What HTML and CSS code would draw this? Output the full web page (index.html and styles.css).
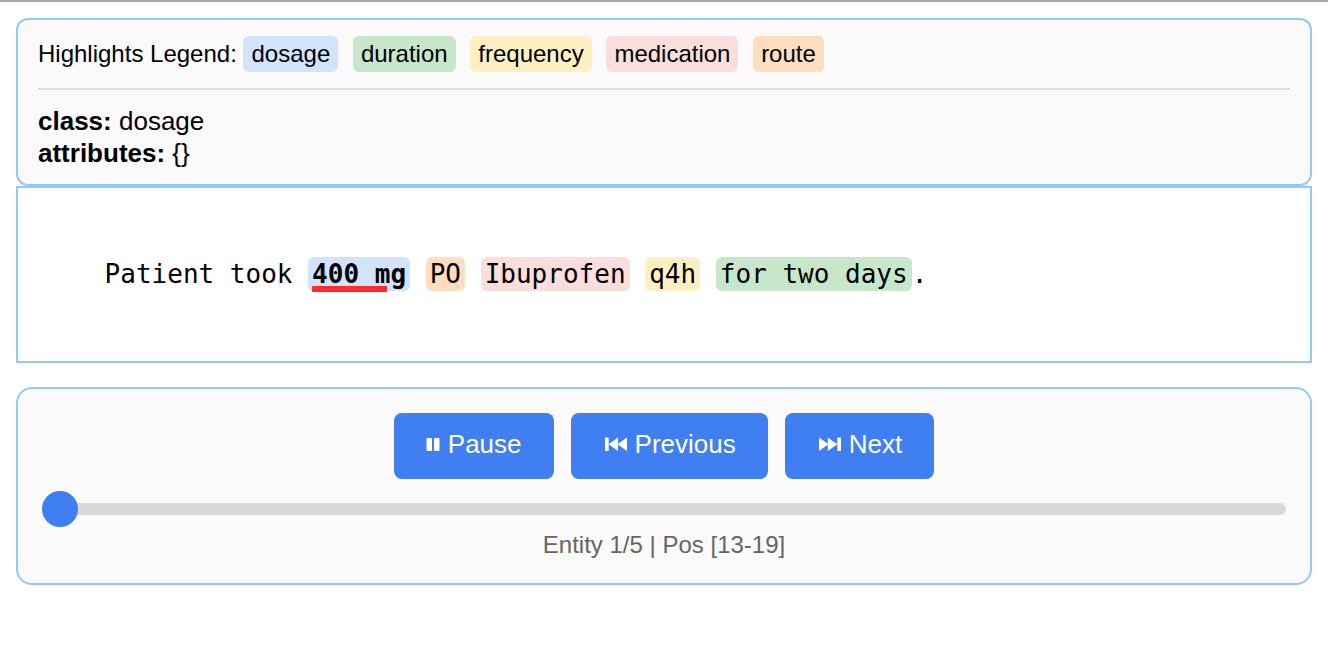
FILE: index.html
```html
<!DOCTYPE html>
<html lang="en">
<head>
<meta charset="utf-8">
<title>Extraction Viewer</title>
<link rel="stylesheet" href="styles.css">
</head>
<body>
<div class="wrapper">
  <div class="attributes-panel">
    <div class="legend">Highlights Legend: <span class="label c-dosage">dosage</span> <span class="label c-duration">duration</span> <span class="label c-frequency">frequency</span> <span class="label c-medication">medication</span> <span class="label c-route">route</span></div>
    <div class="attrs">
      <div><strong>class:</strong> dosage</div>
      <div><strong>attributes:</strong> {}</div>
    </div>
  </div>
  <div class="text-window">
    <div class="sentence">Patient took <span class="hl c-dosage current">400 mg</span> <span class="hl c-route">PO</span> <span class="hl c-medication">Ibuprofen</span> <span class="hl c-frequency">q4h</span> <span class="hl c-duration">for two days</span>.</div>
  </div>
  <div class="controls">
    <div class="button-row">
      <button class="btn" type="button">
        <svg class="icon" width="14" height="14" viewBox="0 0 14 14" aria-hidden="true"><rect x="0.5" y="1" width="5.5" height="13" rx="1"/><rect x="8" y="1" width="5.5" height="13" rx="1"/></svg>
        <span>Pause</span>
      </button>
      <button class="btn" type="button">
        <svg class="icon" width="24" height="14" viewBox="0 0 24 14" aria-hidden="true"><rect x="2" y="0.5" width="3.7" height="13.5"/><polygon points="5.5,7.2 15,0.5 15,14"/><polygon points="14.5,7.2 24,0.5 24,14"/></svg>
        <span>Previous</span>
      </button>
      <button class="btn" type="button">
        <svg class="icon" width="24" height="14" viewBox="0 0 24 14" aria-hidden="true"><polygon points="2,0.5 11.5,7.2 2,14"/><polygon points="10.8,0.5 20.3,7.2 10.8,14"/><rect x="20.3" y="0.5" width="3.7" height="13.5"/></svg>
        <span>Next</span>
      </button>
    </div>
    <div class="progress"><div class="thumb"></div></div>
    <div class="status">Entity 1/5 | Pos [13-19]</div>
  </div>
</div>
</body>
</html>
```
FILE: styles.css
```css
html, body {
  margin: 0;
  background: #ffffff;
}

body {
  border-top: 2px solid #a8a8a8;
  font-family: "Liberation Sans", Arial, sans-serif;
  color: #000;
}

.wrapper {
  padding: 16px 16px 0 16px;
}

.attributes-panel {
  background: #fafafa;
  border: 2px solid #90caf9;
  border-radius: 12px;
  padding: 16px 20px 15px 20px;
}

.legend {
  font-size: 24px;
  padding-bottom: 16px;
  border-bottom: 2px solid #e0e0e0;
  margin-bottom: 15px;
}

.label {
  display: inline-block;
  padding: 4px 8px;
  border-radius: 6px;
  margin-right: 8px;
  color: #000;
}

.attrs {
  font-size: 26px;
  line-height: 32px;
}

.c-dosage { background-color: #D2E3FC; }
.c-duration { background-color: #C8E6C9; }
.c-frequency { background-color: #FEF0C3; }
.c-medication { background-color: #F9DEDC; }
.c-route { background-color: #FFDDBE; }

.text-window {
  font-family: "DejaVu Sans Mono", monospace;
  font-size: 26px;
  line-height: 1.6;
  border: 2px solid #90caf9;
  padding: 24px;
  margin-bottom: 24px;
  background: #fff;
}

.sentence {
  margin: 1.6em 0;
  padding-left: 4ch;
}

.hl {
  padding: 2px 4px;
  border-radius: 6px;
}

.current {
  font-weight: bold;
  text-decoration: underline;
  text-decoration-color: #ff2a2a;
  text-decoration-thickness: 6px;
}

.controls {
  background: #fafafa;
  border: 2px solid #90caf9;
  border-radius: 16px;
  padding: 24px;
}

.button-row {
  display: flex;
  justify-content: center;
  gap: 17px;
  margin-bottom: 24px;
}

.btn {
  display: flex;
  align-items: center;
  gap: 8px;
  background: #3f7ff2;
  color: #fff;
  border: none;
  border-radius: 8px;
  padding: 16px 32px 20px 32px;
  font-family: "Liberation Sans", Arial, sans-serif;
  font-size: 26px;
  line-height: 30px;
  cursor: pointer;
}

.icon {
  display: block;
  fill: #fff;
  flex: none;
}

.progress {
  position: relative;
  height: 12px;
  background: #d8d8d8;
  border-radius: 6px;
  margin-bottom: 16px;
}

.thumb {
  position: absolute;
  left: 0;
  top: -12px;
  width: 36px;
  height: 36px;
  border-radius: 50%;
  background: #3f7ff2;
}

.status {
  text-align: center;
  font-size: 24px;
  color: #666;
}
```
